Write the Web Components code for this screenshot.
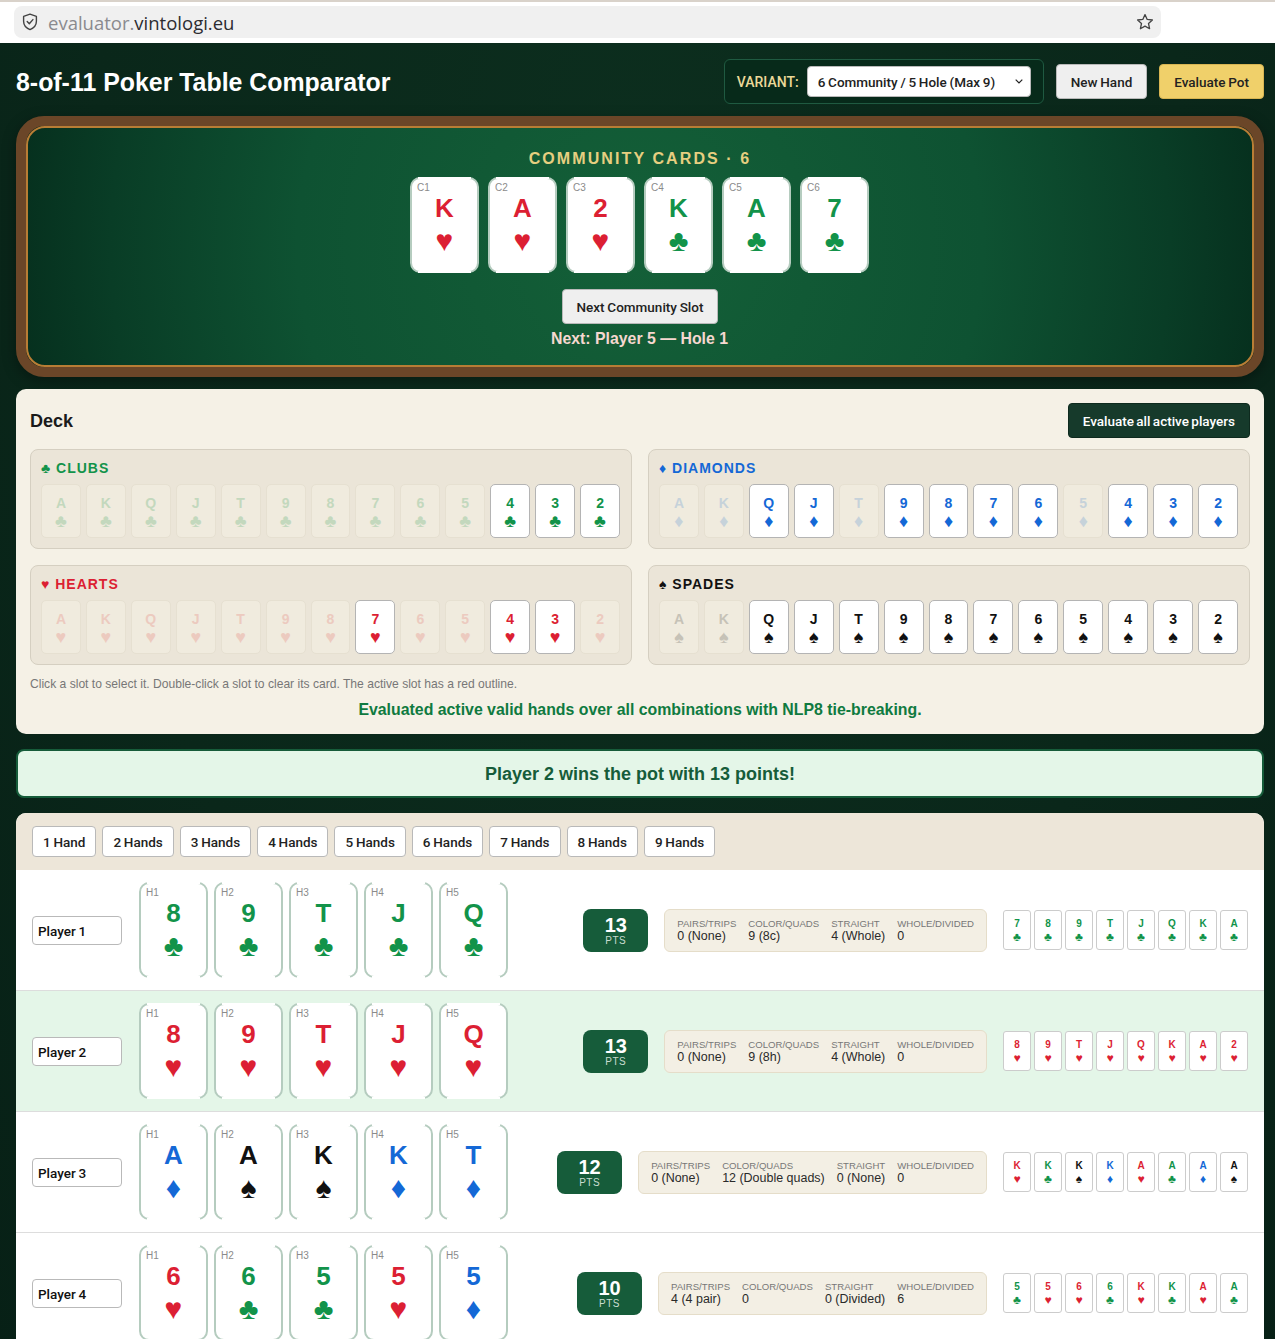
<!DOCTYPE html>
<html lang="en">
<head>
<meta charset="utf-8">
<title>8-of-11 Poker Table Comparator</title>
<style>
  html, body { margin: 0; padding: 0; }
  body {
    font-family: "Liberation Sans", Arial, sans-serif;
    background: #0a271a;
  }
</style>
</head>
<body>
<browser-bar></browser-bar>
<poker-app></poker-app>

<script>
const SUITS = {
  c: { glyph: "♣", color: "#12934a", name: "CLUBS", faded: "#c3d8bd" },
  d: { glyph: "♦", color: "#1468d6", name: "DIAMONDS", faded: "#c6d2da" },
  h: { glyph: "♥", color: "#dc1f33", name: "HEARTS", faded: "#eccabf" },
  s: { glyph: "♠", color: "#111111", name: "SPADES", faded: "#c6c2b7" },
};
const UI_FONT = `Roboto, sans-serif`;
const CHEVRON = `url("data:image/svg+xml,%3Csvg xmlns='http://www.w3.org/2000/svg' width='8' height='5' fill='none' stroke='%23222' stroke-width='1.2'%3E%3Cpath d='M.7.7 4 4 7.3.7'/%3E%3C/svg%3E")`;

class BrowserBar extends HTMLElement {
  constructor() {
    super();
    this.shadowDOM = this.attachShadow({ mode: "open" });
    this.shadowDOM.innerHTML = `
      <style>
        :host {
          display: block;
          height: 43px;
          box-sizing: border-box;
          background: #fff;
          border-top: 2px solid #d9d2ca;
          padding: 4px 114px 0 14px;
        }
        .url {
          height: 32px;
          background: #f0f0f0;
          border-radius: 8px;
          display: flex;
          align-items: center;
          padding: 0 7px 0 8px;
          gap: 10px;
          font: 18.5px "Open Sans", sans-serif;
          color: #2c2c30;
        }
        .url span { color: #8a8a8e; }
        .url b { font-weight: 400; flex: 1; }
        svg { display: block; flex: none; }
      </style>
      <div class="url">
        <svg width="16" height="18" viewBox="0 0 16 18" fill="none" stroke="#444" stroke-width="1.4">
          <path d="M8 1.2 14.4 3.4V8.2C14.4 12 11.8 15 8 16.6 4.2 15 1.6 12 1.6 8.2V3.4Z" stroke-linejoin="round"/>
          <path d="M5.2 8.6 7.3 10.8 10.9 6.6" stroke-linecap="round" stroke-linejoin="round"/>
        </svg>
        <b><span>evaluator.</span>vintologi.eu</b>
        <svg width="18" height="18" viewBox="0 0 18 18" fill="none" stroke="#444" stroke-width="1.3" stroke-linejoin="round">
          <path d="M9 1.6 11.2 6.4 16.4 7 12.5 10.5 13.6 15.7 9 13.1 4.4 15.7 5.5 10.5 1.6 7 6.8 6.4Z"/>
        </svg>
      </div>
    `;
  }
}

class UiButton extends HTMLElement {
  constructor() {
    super();
    this.shadowDOM = this.attachShadow({ mode: "open" });
  }
  connectedCallback() {
    const kind = this.getAttribute("kind") || "plain";
    this.shadowDOM.innerHTML = `
      <style>
        :host { display: inline-block; flex: none; }
        button {
          display: block;
          height: 35px;
          padding: 0 14px;
          border-radius: 4px;
          font: 500 13.5px ${UI_FONT};
          word-spacing: -.6px;
          cursor: pointer;
          color: #222;
          background: #efefef;
          border: 1px solid #b9b9b9;
        }
        button.gold { background: #f0d06a; border-color: #d8b553; }
        button.dark { background: #163a2b; border-color: #0e2a1e; color: #fff; word-spacing: -1px; }
        button.tab { height: 31px; padding: 0 10px; background: #fff; border-color: #b9b9b9; border-radius: 4px; }
      </style>
      <button type="button" class="${kind}"><slot></slot></button>
    `;
  }
}

class PlayCard extends HTMLElement {
  constructor() {
    super();
    this.shadowDOM = this.attachShadow({ mode: "open" });
  }
  connectedCallback() {
    const code = this.getAttribute("card");
    const rank = code[0];
    const suit = SUITS[code[1]];
    const tag = this.getAttribute("tag") || "";
    this.shadowDOM.innerHTML = `
      <style>
        :host { display: block; box-sizing: border-box; flex: none; position: relative; background: #fff; text-align: center; color: ${suit.color}; font-weight: 700; }
        :host([size="big"]) {
          width: 69px;
          height: 96px;
          border: 2px solid #b5ccbf;
          border-radius: 10px;
          padding-top: 14px;
        }
        /* top and bottom edges of the large cards are white between the corners */
        :host([size="big"])::before,
        :host([size="big"])::after {
          content: "";
          position: absolute;
          left: 6px;
          right: 6px;
          height: 2px;
          background: #fff;
        }
        :host([size="big"])::before { top: -2px; }
        :host([size="big"])::after { bottom: -2px; }
        :host([size="deck"]) {
          height: 54px;
          border: 1px solid #b4b4b4;
          border-radius: 5px;
          padding-top: 10px;
        }
        :host([size="mini"]) {
          width: 28px;
          height: 40px;
          border: 1px solid #ccc;
          border-radius: 3px;
          padding-top: 7px;
        }
        :host([off]) { background: #f0ebde; border-color: #e6e0d1; color: ${suit.faded}; }
        .tag {
          position: absolute;
          left: 5px;
          top: 3px;
          font-size: 10px;
          line-height: 12px;
          font-weight: 400;
          color: #8b8b8b;
        }
        .r, .s { display: block; }
        :host([size="big"]) .r { font-size: 26px; line-height: 30px; }
        :host([size="big"]) .s { font-size: 30px; line-height: 32px; margin-top: 2px; }
        :host([size="deck"]) .r { font-size: 14px; line-height: 16px; }
        :host([size="deck"]) .s { font-size: 18px; line-height: 18px; margin-top: 1px; }
        :host([size="mini"]) .r { font-size: 10px; line-height: 12px; }
        :host([size="mini"]) .s { font-size: 12px; line-height: 14px; }
      </style>
      ${tag ? `<span class="tag">${tag}</span>` : ""}
      <span class="r">${rank}</span>
      <span class="s">${suit.glyph}</span>
    `;
  }
}

class TopBar extends HTMLElement {
  constructor() {
    super();
    this.shadowDOM = this.attachShadow({ mode: "open" });
    this.shadowDOM.innerHTML = `
      <style>
        :host { display: flex; align-items: center; gap: 12px; height: 45px; margin-bottom: 12px; }
        h1 { margin: 0; flex: 1; font-size: 24.9px; line-height: 30px; font-weight: 700; color: #fff; }
        .variant {
          display: flex;
          align-items: center;
          gap: 8px;
          box-sizing: border-box;
          height: 45px;
          width: 320px;
          padding: 0 12px;
          background: #072a1a;
          border: 1px solid #1f5a41;
          border-radius: 6px;
          color: #ecd999;
          font: 500 14px ${UI_FONT};
        }
        select {
          flex: 1;
          height: 31px;
          min-width: 0;
          padding: 0 10px;
          appearance: none;
          background: #fff ${CHEVRON} no-repeat right 7px center;
          color: #222;
          border: 1px solid #b9b9b9;
          border-radius: 4px;
          font: 500 13.5px ${UI_FONT};
          word-spacing: -.6px;
        }
      </style>
      <h1>8-of-11 Poker Table Comparator</h1>
      <div class="variant">
        <span>VARIANT:</span>
        <select><option>6 Community / 5 Hole (Max 9)</option></select>
      </div>
      <ui-button>New Hand</ui-button>
      <ui-button kind="gold">Evaluate Pot</ui-button>
    `;
  }
}

class CommunityTable extends HTMLElement {
  constructor() {
    super();
    this.shadowDOM = this.attachShadow({ mode: "open" });
    const cards = ["Kh", "Ah", "2h", "Kc", "Ac", "7c"]
      .map((c, i) => `<play-card size="big" card="${c}" tag="C${i + 1}"></play-card>`)
      .join("");
    this.shadowDOM.innerHTML = `
      <style>
        :host {
          display: block;
          box-sizing: border-box;
          height: 261px;
          margin-bottom: 12px;
          border: 10px solid #6b4628;
          border-radius: 28px;
          box-shadow: 0 4px 14px rgba(0, 0, 0, .35);
        }
        .felt {
          box-sizing: border-box;
          height: 100%;
          border: 2px solid #b87d35;
          border-radius: 19px;
          padding-top: 21px;
          display: flex;
          flex-direction: column;
          align-items: center;
          background: radial-gradient(circle at center, #146038 0%, #0e5232 55%, #093d26 85%, #06301e 100%);
        }
        h2 {
          margin: 0 0 9px;
          font-size: 16px;
          line-height: 19px;
          font-weight: 700;
          letter-spacing: 2.1px;
          color: #e6cf80;
        }
        .cards { display: flex; gap: 9px; margin: 0 1px 16px 0; }
        p {
          margin: 5px 1px 0 0;
          font-size: 15.85px;
          line-height: 19px;
          font-weight: 700;
          color: #f6d8d0;
        }
      </style>
      <div class="felt">
        <h2>COMMUNITY CARDS · 6</h2>
        <div class="cards">${cards}</div>
        <ui-button>Next Community Slot</ui-button>
        <p>Next: Player 5 — Hole 1</p>
      </div>
    `;
  }
}

class SuitGroup extends HTMLElement {
  constructor() {
    super();
    this.shadowDOM = this.attachShadow({ mode: "open" });
  }
  connectedCallback() {
    const key = this.getAttribute("suit");
    const suit = SUITS[key];
    const live = (this.getAttribute("live") || "").split("");
    const cards = "AKQJT98765432".split("").map((r) =>
      `<play-card size="deck" card="${r}${key}" ${live.includes(r) ? "" : "off"}></play-card>`
    ).join("");
    this.shadowDOM.innerHTML = `
      <style>
        :host {
          display: block;
          box-sizing: border-box;
          height: 100px;
          background: #ebe5d8;
          border: 1px solid #d5cfc1;
          border-radius: 8px;
          padding: 10px 11px 10px 10px;
        }
        .title {
          font-size: 14px;
          line-height: 17px;
          font-weight: 700;
          letter-spacing: 1px;
          color: ${suit.color};
          margin-bottom: 7px;
        }
        .grid { display: grid; grid-template-columns: repeat(13, 1fr); gap: 5px; }
      </style>
      <div class="title">${suit.glyph} ${suit.name}</div>
      <div class="grid">${cards}</div>
    `;
  }
}

class DeckPanel extends HTMLElement {
  constructor() {
    super();
    this.shadowDOM = this.attachShadow({ mode: "open" });
    this.shadowDOM.innerHTML = `
      <style>
        :host {
          display: block;
          box-sizing: border-box;
          height: 345px;
          margin-bottom: 15px;
          background: #f5f1e6;
          border-radius: 10px;
          padding: 14px;
        }
        header { display: flex; align-items: center; justify-content: space-between; margin-bottom: 11px; }
        h2 { margin: 0; padding-top: 1px; font-size: 18px; line-height: 34px; font-weight: 700; color: #1a1a1a; }
        .suits { display: grid; grid-template-columns: 1fr 1fr; gap: 16px; }
        .hint { margin: 12px 0 0; font-size: 12.1px; line-height: 14px; color: #777; }
        .msg { margin: 9px 0 0; text-align: center; font-size: 15.86px; line-height: 19px; font-weight: 700; color: #0f7a40; }
      </style>
      <header>
        <h2>Deck</h2>
        <ui-button kind="dark">Evaluate all active players</ui-button>
      </header>
      <div class="suits">
        <suit-group suit="c" live="432"></suit-group>
        <suit-group suit="d" live="QJ9876432"></suit-group>
        <suit-group suit="h" live="743"></suit-group>
        <suit-group suit="s" live="QJT98765432"></suit-group>
      </div>
      <p class="hint">Click a slot to select it. Double-click a slot to clear its card. The active slot has a red outline.</p>
      <p class="msg">Evaluated active valid hands over all combinations with NLP8 tie-breaking.</p>
    `;
  }
}

class WinnerBanner extends HTMLElement {
  constructor() {
    super();
    this.shadowDOM = this.attachShadow({ mode: "open" });
    this.shadowDOM.innerHTML = `
      <style>
        :host {
          display: flex;
          align-items: center;
          justify-content: center;
          box-sizing: border-box;
          height: 49px;
          padding-top: 2px;
          margin-bottom: 15px;
          background: #e4f6e8;
          border: 2px solid #165c3a;
          border-radius: 8px;
          font-size: 18px;
          font-weight: 700;
          color: #165c3a;
        }
      </style>
      <slot></slot>
    `;
  }
}

class PlayerRow extends HTMLElement {
  constructor() {
    super();
    this.shadowDOM = this.attachShadow({ mode: "open" });
  }
  connectedCallback() {
    const hole = this.getAttribute("hole").split(" ")
      .map((c, i) => `<play-card size="big" card="${c}" tag="H${i + 1}"></play-card>`).join("");
    const best = this.getAttribute("best").split(" ")
      .map((c) => `<play-card size="mini" card="${c}"></play-card>`).join("");
    const labels = ["PAIRS/TRIPS", "COLOR/QUADS", "STRAIGHT", "WHOLE/DIVIDED"];
    const stats = this.getAttribute("stats").split("|")
      .map((v, i) => `<div><small>${labels[i]}</small><span>${v}</span></div>`).join("");
    this.shadowDOM.innerHTML = `
      <style>
        :host {
          display: flex;
          align-items: center;
          box-sizing: border-box;
          height: 121px;
          padding: 0 16px;
          background: #fff;
          border-bottom: 1px solid #ddd;
        }
        :host([winner]) { background: #e4f6e8; }
        .name {
          box-sizing: border-box;
          width: 90px;
          height: 29px;
          flex: none;
          margin-right: 17px;
          padding: 1px 5px 0;
          border: 1px solid #b9b9b9;
          border-radius: 4px;
          background: #fff;
          color: #111;
          font: 500 13.5px ${UI_FONT};
          word-spacing: -.6px;
        }
        .hole { display: flex; gap: 6px; flex: none; }
        .right { flex: 1; display: flex; justify-content: flex-end; align-items: center; gap: 16px; }
        .score {
          box-sizing: border-box;
          width: 65px;
          height: 43px;
          flex: none;
          padding-top: 5px;
          border-radius: 8px;
          background: #165c3a;
          color: #fff;
          text-align: center;
          font-size: 20px;
          line-height: 22px;
          font-weight: 700;
        }
        .score small {
          display: block;
          font-size: 10px;
          line-height: 10px;
          font-weight: 400;
          letter-spacing: .5px;
          color: #c9dcd0;
        }
        .stats {
          box-sizing: border-box;
          height: 43px;
          display: flex;
          align-items: center;
          gap: 12px;
          padding: 0 12px;
          background: #f3efe4;
          border: 1px solid #e5ddc9;
          border-radius: 6px;
          font-size: 12.48px;
          color: #2a2a2a;
        }
        .stats small { display: block; font-size: 9.6px; line-height: 12px; color: #777; }
        .stats span { display: block; line-height: 13px; white-space: nowrap; }
        .best { display: flex; gap: 3px; flex: none; }
      </style>
      <input class="name" type="text" value="${this.getAttribute("name")}" aria-label="Player name">
      <div class="hole">${hole}</div>
      <div class="right">
        <div class="score">${this.getAttribute("score")}<small>PTS</small></div>
        <div class="stats">${stats}</div>
        <div class="best">${best}</div>
      </div>
    `;
  }
}

class PlayersPanel extends HTMLElement {
  constructor() {
    super();
    this.shadowDOM = this.attachShadow({ mode: "open" });
    const tabs = ["1 Hand", "2 Hands", "3 Hands", "4 Hands", "5 Hands", "6 Hands", "7 Hands", "8 Hands", "9 Hands"]
      .map((t) => `<ui-button kind="tab">${t}</ui-button>`).join("");
    this.shadowDOM.innerHTML = `
      <style>
        :host {
          display: block;
          background: #fff;
          border-radius: 10px 10px 0 0;
          overflow: hidden;
        }
        .tabs { display: flex; gap: 6px; height: 57px; box-sizing: border-box; padding: 13px 16px; background: #ede6d9; }
      </style>
      <div class="tabs">${tabs}</div>
      <player-row name="Player 1" hole="8c 9c Tc Jc Qc" score="13" stats="0 (None)|9 (8c)|4 (Whole)|0" best="7c 8c 9c Tc Jc Qc Kc Ac"></player-row>
      <player-row winner name="Player 2" hole="8h 9h Th Jh Qh" score="13" stats="0 (None)|9 (8h)|4 (Whole)|0" best="8h 9h Th Jh Qh Kh Ah 2h"></player-row>
      <player-row name="Player 3" hole="Ad As Ks Kd Td" score="12" stats="0 (None)|12 (Double quads)|0 (None)|0" best="Kh Kc Ks Kd Ah Ac Ad As"></player-row>
      <player-row name="Player 4" hole="6h 6c 5c 5h 5d" score="10" stats="4 (4 pair)|0|0 (Divided)|6" best="5c 5h 6h 6c Kh Kc Ah Ac"></player-row>
    `;
  }
}

class PokerApp extends HTMLElement {
  constructor() {
    super();
    this.shadowDOM = this.attachShadow({ mode: "open" });
    this.shadowDOM.innerHTML = `
      <style>
        :host {
          display: block;
          box-sizing: border-box;
          padding: 16px 11px 16px 16px;
          background: radial-gradient(ellipse at 50% 10%, #0c2e1e 0%, #0a271a 60%, #072016 100%);
        }
      </style>
      <top-bar></top-bar>
      <community-table></community-table>
      <deck-panel></deck-panel>
      <winner-banner>Player 2 wins the pot with 13 points!</winner-banner>
      <players-panel></players-panel>
    `;
  }
}

customElements.define("browser-bar", BrowserBar);
customElements.define("ui-button", UiButton);
customElements.define("play-card", PlayCard);
customElements.define("top-bar", TopBar);
customElements.define("community-table", CommunityTable);
customElements.define("suit-group", SuitGroup);
customElements.define("deck-panel", DeckPanel);
customElements.define("winner-banner", WinnerBanner);
customElements.define("player-row", PlayerRow);
customElements.define("players-panel", PlayersPanel);
customElements.define("poker-app", PokerApp);
</script>
</body>
</html>
